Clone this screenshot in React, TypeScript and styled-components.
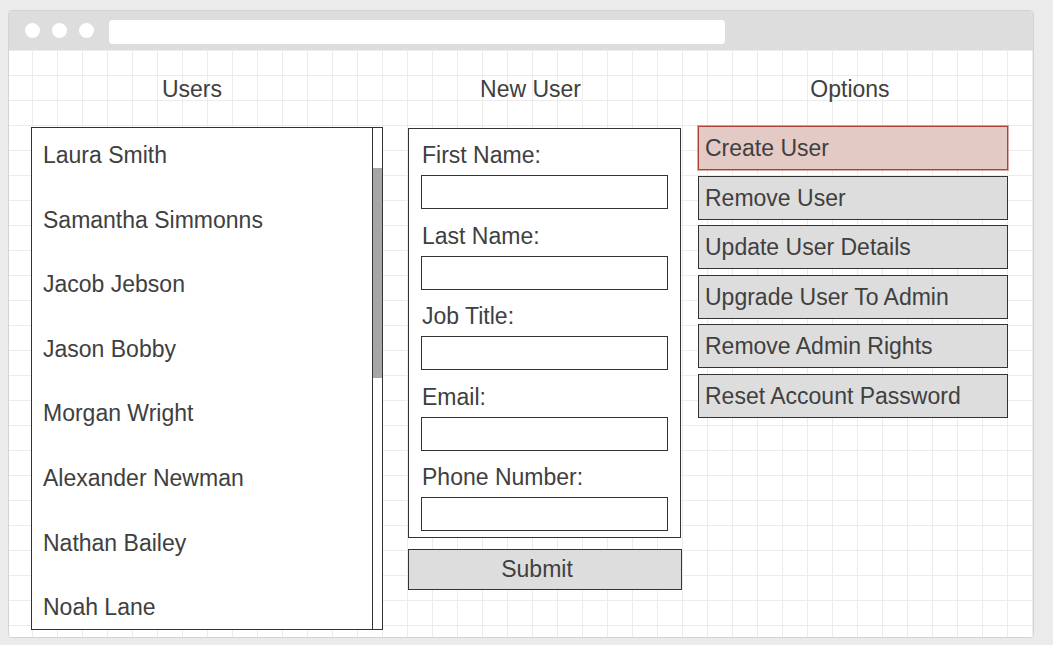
import styled, { createGlobalStyle } from "styled-components";

const users = [
  "Laura Smith",
  "Samantha Simmonns",
  "Jacob Jebson",
  "Jason Bobby",
  "Morgan Wright",
  "Alexander Newman",
  "Nathan Bailey",
  "Noah Lane",
];

const fields = ["First Name:", "Last Name:", "Job Title:", "Email:", "Phone Number:"];

const options = [
  "Create User",
  "Remove User",
  "Update User Details",
  "Upgrade User To Admin",
  "Remove Admin Rights",
  "Reset Account Password",
];

export default function App() {
  return (
    <>
      <GlobalStyle />
      <Window>
        <TitleBar>
          <Dot />
          <Dot />
          <Dot />
          <UrlBar />
        </TitleBar>
        <Canvas>
          <Column $width={352} $gap={22}>
            <Heading $shift={-15}>Users</Heading>
            <UserList>
              <Items>
                {users.map((u) => (
                  <Item key={u}>{u}</Item>
                ))}
              </Items>
              <Track>
                <Thumb />
              </Track>
            </UserList>
          </Column>
          <Column $width={273} $gap={25}>
            <Heading $shift={-14}>New User</Heading>
            <Form onSubmit={(e) => e.preventDefault()} $top={26}>
              {fields.map((f) => (
                <Field key={f}>
                  <Label>{f}</Label>
                  <Input />
                </Field>
              ))}
            </Form>
            <SubmitButton type="submit">Submit</SubmitButton>
          </Column>
          <Column $width={310} $gap={17}>
            <Heading $shift={-3}>Options</Heading>
            <Buttons>
              {options.map((o, i) => (
                <OptionButton key={o} $active={i === 0}>
                  {o}
                </OptionButton>
              ))}
            </Buttons>
          </Column>
        </Canvas>
      </Window>
    </>
  );
}

const GlobalStyle = createGlobalStyle`
  html, body {
    margin: 0;
    background: #ebebeb;
    font-family: "Liberation Sans", Arial, sans-serif;
    color: #404040;
  }
  * { box-sizing: border-box; }
`;

const Window = styled.div`
  margin: 10px 0 0 8px;
  width: 1026px;
  height: 628px;
  border: 1px solid #d2d2d2;
  border-radius: 4px;
  overflow: hidden;
  background: #fff;
  display: flex;
  flex-direction: column;
`;

const TitleBar = styled.div`
  height: 39px;
  flex-shrink: 0;
  background: #dddddd;
  display: flex;
  align-items: center;
  gap: 12px;
  padding-left: 16px;
`;

const Dot = styled.span`
  width: 15px;
  height: 15px;
  border-radius: 50%;
  background: #fff;
`;

const UrlBar = styled.div`
  margin-left: 3px;
  width: 616px;
  height: 24px;
  background: #fff;
  border-radius: 4px;
  margin-top: 2px;
`;

const Canvas = styled.div`
  flex: 1;
  display: flex;
  align-items: flex-start;
  background-color: #fff;
  background-image: linear-gradient(to right, #ececec 1px, transparent 1px),
    linear-gradient(to bottom, #ececec 1px, transparent 1px);
  background-size: 25px 25px;
  background-position: 23px 0;
`;

const Column = styled.div<{ $width: number; $gap: number }>`
  width: ${(p) => p.$width}px;
  margin-left: ${(p) => p.$gap}px;
  display: flex;
  flex-direction: column;
`;

const Heading = styled.div<{ $shift: number }>`
  margin-top: 26px;
  height: 26px;
  line-height: 26px;
  font-size: 23px;
  text-align: center;
  margin-left: ${(p) => p.$shift}px;
  margin-right: ${(p) => -p.$shift}px;
`;

const UserList = styled.div`
  margin-top: 25px;
  height: 503px;
  border: 1px solid #333;
  background: #fff;
  display: flex;
`;

const Items = styled.div`
  flex: 1;
  display: flex;
  flex-direction: column;
  gap: 38.6px;
  padding: 14px 0 0 11px;
`;

const Item = styled.div`
  font-size: 23px;
  line-height: 26px;
  height: 26px;
`;

const Track = styled.div`
  width: 10px;
  border-left: 1px solid #333;
  padding-top: 40px;
`;

const Thumb = styled.div`
  height: 210px;
  background: #a6a6a6;
`;

const Form = styled.form<{ $top: number }>`
  margin-top: ${(p) => p.$top}px;
  height: 410px;
  border: 1px solid #333;
  background: #fff;
  padding: 13px 12px 0 12px;
  display: flex;
  flex-direction: column;
  gap: 13.5px;
`;

const Field = styled.label`
  display: flex;
  flex-direction: column;
  gap: 7px;
`;

const Label = styled.span`
  font-size: 23px;
  line-height: 26px;
  padding-left: 1px;
`;

const Input = styled.input`
  height: 34px;
  width: 247px;
  border: 1px solid #333;
  border-radius: 0;
  background: #fff;
  font: inherit;
  outline: none;
`;

const SubmitButton = styled.button`
  margin-top: 11px;
  width: 274px;
  height: 41px;
  background: #dddddd;
  border: 1px solid #333;
  border-radius: 0;
  font-family: inherit;
  font-size: 23px;
  color: #404040;
  padding: 0 16px 0 0;
`;

const Buttons = styled.div`
  margin-top: 24px;
  display: flex;
  flex-direction: column;
  gap: 5.5px;
`;

const OptionButton = styled.button<{ $active?: boolean }>`
  height: 44px;
  width: 310px;
  text-align: left;
  padding: 1px 0 0 6px;
  font-family: inherit;
  font-size: 23px;
  color: #404040;
  border-radius: 0;
  background: ${(p) => (p.$active ? "#e4cac5" : "#dddddd")};
  border: 1px solid ${(p) => (p.$active ? "#ae4132" : "#333")};
  box-shadow: ${(p) => (p.$active ? "0 0 0 1px rgba(174, 65, 50, 0.45)" : "none")};
`;
